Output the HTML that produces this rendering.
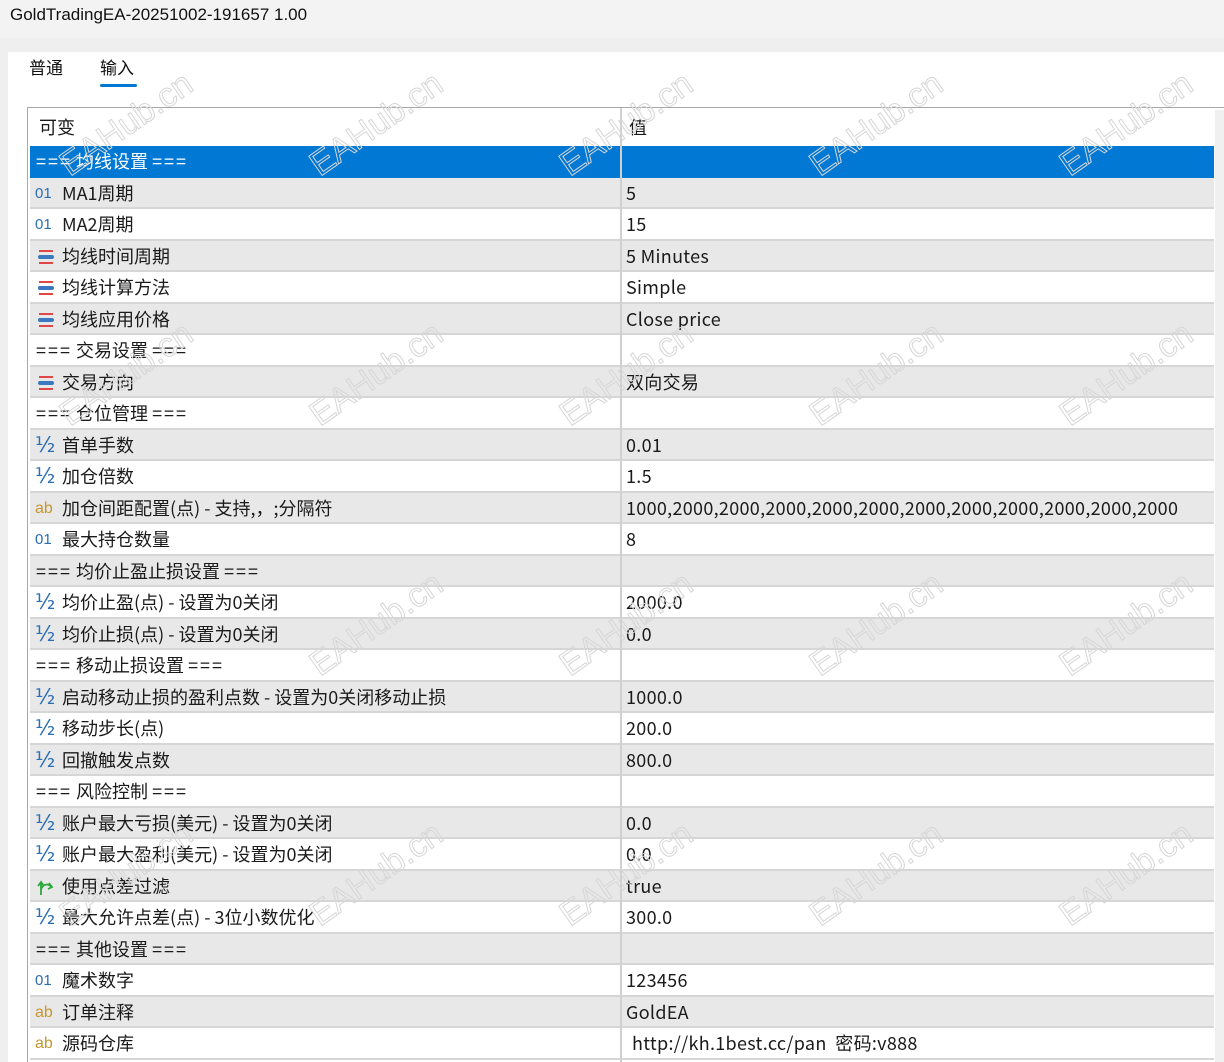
<!DOCTYPE html>
<html style="overflow:hidden"><head><meta charset="utf-8">
<style>
*{margin:0;padding:0;box-sizing:border-box}
html,body{width:1224px;height:1062px;overflow:hidden}
body{background:#efefef;font-family:"Noto Sans CJK SC","Liberation Sans",sans-serif;color:#1a1a1a;position:relative}
.title{position:absolute;left:10px;top:3px;font-size:17px;color:#111;font-family:"Liberation Sans",sans-serif;line-height:24px}
.topbar{position:absolute;left:0;top:0;width:1224px;height:38px;background:#f3f3f3}
.panel{position:absolute;left:8px;top:52px;width:1216px;height:1010px;background:#fff}
.tab{position:absolute;top:54px;font-size:17px;color:#111;line-height:26px}
.ul{position:absolute;left:100px;top:84px;width:37px;height:3px;background:#0078d4;border-radius:2px}
.tbl{position:absolute;left:27px;top:107px;width:1197px;height:955px;border-top:1px solid #a8a8a8;border-left:1px solid #a8a8a8}
.hdr{position:absolute;left:28px;top:108px;width:1186px;height:38px;background:#fff;font-size:18px}
.hdr span{position:absolute;top:6px;line-height:26px}
.row{position:absolute;left:30px;width:1184px;height:31.5px;border-bottom:2px solid #d6d6d6;font-size:18px;line-height:30px}
.g{background:#e8e8e8}
.w{background:#fff}
.sel{background:#0078d4;color:#fff;border-bottom:none}
.row .n{position:absolute;left:32px;top:0;white-space:nowrap}
.row .s{position:absolute;left:6px;top:0;white-space:nowrap}
.row .s b{font-weight:normal;letter-spacing:2px}
.row .v{position:absolute;left:596px;top:0;white-space:nowrap;letter-spacing:0.3px}
.row .ic{position:absolute;left:5px;top:6px;width:22px;line-height:20px}
.i01{color:#2a6eb5;font-size:15px;font-family:"Liberation Sans",sans-serif}
.iab{color:#c8962e;font-size:16px;font-family:"Liberation Sans",sans-serif}
.ihf{color:#2a6eb5;font-size:21px!important;top:5px!important;font-family:"DejaVu Sans",sans-serif}
.vdiv{position:absolute;left:620px;top:108px;width:2px;height:954px;background:#d0d0d0}
.scroll{position:absolute;left:1215px;top:110px;width:9px;height:952px;background:#f0f0f0}
.wm{position:absolute;font-size:34px;color:transparent;-webkit-text-stroke:1px #d6d6d6;transform:rotate(-35deg);white-space:nowrap;font-family:"Liberation Sans",sans-serif;pointer-events:none}
</style></head><body>
<div class="topbar"></div>
<div class="title">GoldTradingEA-20251002-191657 1.00</div>
<div class="panel"></div>
<div class="tab" style="left:29px">普通</div>
<div class="tab" style="left:100px">输入</div>
<div class="ul"></div>
<div class="tbl"></div>
<div class="hdr"><span style="left:11px">可变</span><span style="left:601px">值</span></div>
<div class="scroll"></div>

<div class="row sel" style="top:146px"><span class="s"><b>===</b> 均线设置 <b>===</b></span></div>
<div class="row g" style="top:177.5px"><span class="ic i01">01</span><span class="n">MA1周期</span><span class="v">5</span></div>
<div class="row w" style="top:209px"><span class="ic i01">01</span><span class="n">MA2周期</span><span class="v">15</span></div>
<div class="row g" style="top:240.5px"><svg class="ic" width="18" height="20" viewBox="0 0 18 20"><rect x="2" y="3" width="14" height="2" fill="#e04848"/><rect x="1" y="8" width="16" height="4" rx="2" fill="#3a78c0"/><rect x="2" y="15" width="14" height="2" fill="#e04848"/></svg><span class="n">均线时间周期</span><span class="v">5 Minutes</span></div>
<div class="row w" style="top:272px"><svg class="ic" width="18" height="20" viewBox="0 0 18 20"><rect x="2" y="3" width="14" height="2" fill="#e04848"/><rect x="1" y="8" width="16" height="4" rx="2" fill="#3a78c0"/><rect x="2" y="15" width="14" height="2" fill="#e04848"/></svg><span class="n">均线计算方法</span><span class="v">Simple</span></div>
<div class="row g" style="top:303.5px"><svg class="ic" width="18" height="20" viewBox="0 0 18 20"><rect x="2" y="3" width="14" height="2" fill="#e04848"/><rect x="1" y="8" width="16" height="4" rx="2" fill="#3a78c0"/><rect x="2" y="15" width="14" height="2" fill="#e04848"/></svg><span class="n">均线应用价格</span><span class="v">Close price</span></div>
<div class="row w" style="top:335px"><span class="s"><b>===</b> 交易设置 <b>===</b></span></div>
<div class="row g" style="top:366.5px"><svg class="ic" width="18" height="20" viewBox="0 0 18 20"><rect x="2" y="3" width="14" height="2" fill="#e04848"/><rect x="1" y="8" width="16" height="4" rx="2" fill="#3a78c0"/><rect x="2" y="15" width="14" height="2" fill="#e04848"/></svg><span class="n">交易方向</span><span class="v">双向交易</span></div>
<div class="row w" style="top:398px"><span class="s"><b>===</b> 仓位管理 <b>===</b></span></div>
<div class="row g" style="top:429.5px"><span class="ic ihf">½</span><span class="n">首单手数</span><span class="v">0.01</span></div>
<div class="row w" style="top:461px"><span class="ic ihf">½</span><span class="n">加仓倍数</span><span class="v">1.5</span></div>
<div class="row g" style="top:492.5px"><span class="ic iab">ab</span><span class="n">加仓间距配置(点) - 支持,，;分隔符</span><span class="v">1000,2000,2000,2000,2000,2000,2000,2000,2000,2000,2000,2000</span></div>
<div class="row w" style="top:524px"><span class="ic i01">01</span><span class="n">最大持仓数量</span><span class="v">8</span></div>
<div class="row g" style="top:555.5px"><span class="s"><b>===</b> 均价止盈止损设置 <b>===</b></span></div>
<div class="row w" style="top:587px"><span class="ic ihf">½</span><span class="n">均价止盈(点) - 设置为0关闭</span><span class="v">2000.0</span></div>
<div class="row g" style="top:618.5px"><span class="ic ihf">½</span><span class="n">均价止损(点) - 设置为0关闭</span><span class="v">0.0</span></div>
<div class="row w" style="top:650px"><span class="s"><b>===</b> 移动止损设置 <b>===</b></span></div>
<div class="row g" style="top:681.5px"><span class="ic ihf">½</span><span class="n">启动移动止损的盈利点数 - 设置为0关闭移动止损</span><span class="v">1000.0</span></div>
<div class="row w" style="top:713px"><span class="ic ihf">½</span><span class="n">移动步长(点)</span><span class="v">200.0</span></div>
<div class="row g" style="top:744.5px"><span class="ic ihf">½</span><span class="n">回撤触发点数</span><span class="v">800.0</span></div>
<div class="row w" style="top:776px"><span class="s"><b>===</b> 风险控制 <b>===</b></span></div>
<div class="row g" style="top:807.5px"><span class="ic ihf">½</span><span class="n">账户最大亏损(美元) - 设置为0关闭</span><span class="v">0.0</span></div>
<div class="row w" style="top:839px"><span class="ic ihf">½</span><span class="n">账户最大盈利(美元) - 设置为0关闭</span><span class="v">0.0</span></div>
<div class="row g" style="top:870.5px"><svg class="ic" width="20" height="20" viewBox="0 0 20 20"><path d="M5 18 V6 M2 9 L5 5 L8 9 M5 12 Q8 6 13 8 L16 10 M13 6 L16 10 L12 12" fill="none" stroke="#2aa83a" stroke-width="1.8"/></svg><span class="n">使用点差过滤</span><span class="v">true</span></div>
<div class="row w" style="top:902px"><span class="ic ihf">½</span><span class="n">最大允许点差(点) - 3位小数优化</span><span class="v">300.0</span></div>
<div class="row g" style="top:933.5px"><span class="s"><b>===</b> 其他设置 <b>===</b></span></div>
<div class="row w" style="top:965px"><span class="ic i01">01</span><span class="n">魔术数字</span><span class="v">123456</span></div>
<div class="row g" style="top:996.5px"><span class="ic iab">ab</span><span class="n">订单注释</span><span class="v">GoldEA</span></div>
<div class="row w" style="top:1028px;height:32px"><span class="ic iab">ab</span><span class="n">源码仓库</span><span class="v" style="left:602px">http://kh.1best.cc/pan&nbsp; 密码:v888</span></div>
<div class="vdiv"></div>

<div class="wm" style="left:50px;top:105px">EAHub.cn</div>
<div class="wm" style="left:300px;top:105px">EAHub.cn</div>
<div class="wm" style="left:550px;top:105px">EAHub.cn</div>
<div class="wm" style="left:800px;top:105px">EAHub.cn</div>
<div class="wm" style="left:1050px;top:105px">EAHub.cn</div>
<div class="wm" style="left:50px;top:355px">EAHub.cn</div>
<div class="wm" style="left:300px;top:355px">EAHub.cn</div>
<div class="wm" style="left:550px;top:355px">EAHub.cn</div>
<div class="wm" style="left:800px;top:355px">EAHub.cn</div>
<div class="wm" style="left:1050px;top:355px">EAHub.cn</div>
<div class="wm" style="left:300px;top:605px">EAHub.cn</div>
<div class="wm" style="left:550px;top:605px">EAHub.cn</div>
<div class="wm" style="left:800px;top:605px">EAHub.cn</div>
<div class="wm" style="left:1050px;top:605px">EAHub.cn</div>
<div class="wm" style="left:50px;top:855px">EAHub.cn</div>
<div class="wm" style="left:300px;top:855px">EAHub.cn</div>
<div class="wm" style="left:550px;top:855px">EAHub.cn</div>
<div class="wm" style="left:800px;top:855px">EAHub.cn</div>
<div class="wm" style="left:1050px;top:855px">EAHub.cn</div>
</body></html>
